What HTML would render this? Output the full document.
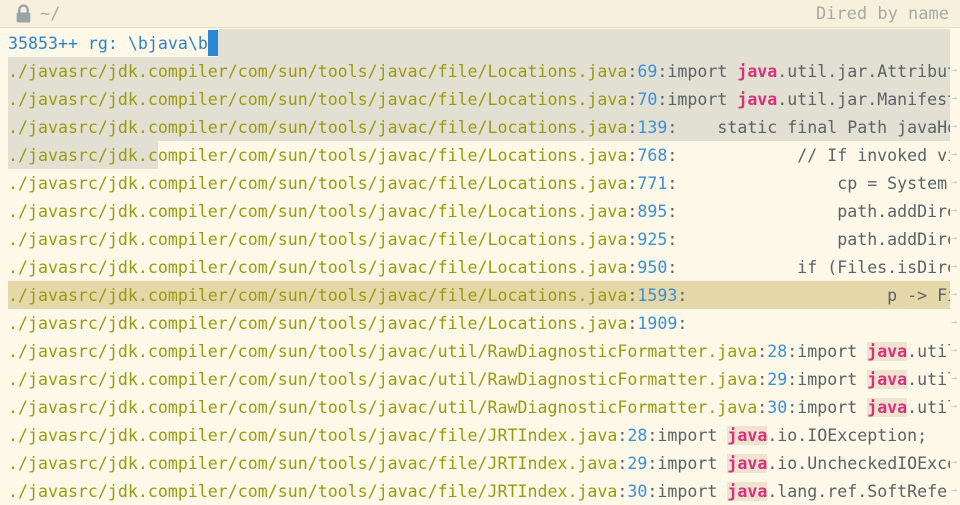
<!DOCTYPE html>
<html><head><meta charset="utf-8"><style>
*{margin:0;padding:0;box-sizing:border-box}
body{width:960px;height:505px;overflow:hidden;background:#fdf8e7;position:relative;font-family:"DejaVu Sans Mono","Liberation Mono",monospace;font-size:16.6px;color:#5b6268}
#hdr{position:absolute;left:0;top:0;width:960px;height:28px;background:#f6f0dc;border-bottom:1px solid #e2dcc8}
#hdr .t{position:absolute;top:3px;line-height:22px;color:#a7aaa3;font-size:17px}
.row{position:absolute;left:8px;width:942px;height:28px;line-height:30px;white-space:pre;overflow:hidden}
.p{color:#9b9a0e}.n{color:#3b8fd6}.j{color:#d8317c;font-weight:bold}.jb{background:#efe3cf}
.g{position:absolute;background:#e2e0d3}
.ar{position:absolute;left:951px;width:9px;height:28px;line-height:28px;font-size:10px;color:#c9c6b8}
</style></head><body>
<div id="hdr">
<svg style="position:absolute;left:15px;top:4px" width="17" height="19" viewBox="0 0 16 18"><path d="M4 8V5.5a4 4 0 0 1 8 0V8" fill="none" stroke="#9aa4a6" stroke-width="2.2"/><rect x="1.5" y="8" width="13" height="9.5" rx="1.5" fill="#9aa4a6"/></svg>
<span class="t" style="left:40px">~/</span>
<span class="t" style="right:11px">Dired by name</span>
</div>
<div class="g" style="left:218px;top:29px;width:732px;height:28px"></div>
<div class="g" style="left:8px;top:57px;width:942px;height:84px"></div>
<div class="g" style="left:8px;top:141px;width:150px;height:28px"></div>
<div class="g" style="left:8px;top:281px;width:942px;height:28px;background:#e4d7a8"></div>
<div style="position:absolute;left:208px;top:30px;width:10px;height:26px;background:#2b87d4"></div>

<div class="row" style="top:29px;color:#2f82c8">35853++ rg: \bjava\b</div>
<div class="row" style="top:57px"><span class="p">./javasrc/jdk.compiler/com/sun/tools/javac/file/Locations.java</span>:<span class="n">69</span>:import <span class="j">java</span>.util.jar.Attributes;</div>
<div class="row" style="top:85px"><span class="p">./javasrc/jdk.compiler/com/sun/tools/javac/file/Locations.java</span>:<span class="n">70</span>:import <span class="j">java</span>.util.jar.Manifest;</div>
<div class="row" style="top:113px"><span class="p">./javasrc/jdk.compiler/com/sun/tools/javac/file/Locations.java</span>:<span class="n">139</span>:    static final Path javaHome</div>
<div class="row" style="top:141px"><span class="p">./javasrc/jdk.compiler/com/sun/tools/javac/file/Locations.java</span>:<span class="n">768</span>:            // If invoked via</div>
<div class="row" style="top:169px"><span class="p">./javasrc/jdk.compiler/com/sun/tools/javac/file/Locations.java</span>:<span class="n">771</span>:                cp = System.get</div>
<div class="row" style="top:197px"><span class="p">./javasrc/jdk.compiler/com/sun/tools/javac/file/Locations.java</span>:<span class="n">895</span>:                path.addDirectory</div>
<div class="row" style="top:225px"><span class="p">./javasrc/jdk.compiler/com/sun/tools/javac/file/Locations.java</span>:<span class="n">925</span>:                path.addDirectory</div>
<div class="row" style="top:253px"><span class="p">./javasrc/jdk.compiler/com/sun/tools/javac/file/Locations.java</span>:<span class="n">950</span>:            if (Files.isDirectory</div>
<div class="row" style="top:281px"><span class="p">./javasrc/jdk.compiler/com/sun/tools/javac/file/Locations.java</span>:<span class="n">1593</span>:                    p -> Files</div>
<div class="row" style="top:309px"><span class="p">./javasrc/jdk.compiler/com/sun/tools/javac/file/Locations.java</span>:<span class="n">1909</span>:</div>
<div class="row" style="top:337px"><span class="p">./javasrc/jdk.compiler/com/sun/tools/javac/util/RawDiagnosticFormatter.java</span>:<span class="n">28</span>:import <span class="j jb">java</span>.util.Locale;</div>
<div class="row" style="top:365px"><span class="p">./javasrc/jdk.compiler/com/sun/tools/javac/util/RawDiagnosticFormatter.java</span>:<span class="n">29</span>:import <span class="j jb">java</span>.util.Map;</div>
<div class="row" style="top:393px"><span class="p">./javasrc/jdk.compiler/com/sun/tools/javac/util/RawDiagnosticFormatter.java</span>:<span class="n">30</span>:import <span class="j jb">java</span>.util.Set;</div>
<div class="row" style="top:421px"><span class="p">./javasrc/jdk.compiler/com/sun/tools/javac/file/JRTIndex.java</span>:<span class="n">28</span>:import <span class="j jb">java</span>.io.IOException;</div>
<div class="row" style="top:449px"><span class="p">./javasrc/jdk.compiler/com/sun/tools/javac/file/JRTIndex.java</span>:<span class="n">29</span>:import <span class="j jb">java</span>.io.UncheckedIOException;</div>
<div class="row" style="top:477px"><span class="p">./javasrc/jdk.compiler/com/sun/tools/javac/file/JRTIndex.java</span>:<span class="n">30</span>:import <span class="j jb">java</span>.lang.ref.SoftReference;</div>

<div class="ar" style="top:57px">→</div><div class="ar" style="top:85px">→</div><div class="ar" style="top:113px">→</div><div class="ar" style="top:141px">→</div><div class="ar" style="top:169px">→</div><div class="ar" style="top:197px">→</div><div class="ar" style="top:225px">→</div><div class="ar" style="top:253px">→</div><div class="ar" style="top:281px">→</div><div class="ar" style="top:309px">→</div><div class="ar" style="top:337px">→</div><div class="ar" style="top:365px">→</div><div class="ar" style="top:393px">→</div><div class="ar" style="top:449px">→</div><div class="ar" style="top:477px">→</div>
</body></html>
